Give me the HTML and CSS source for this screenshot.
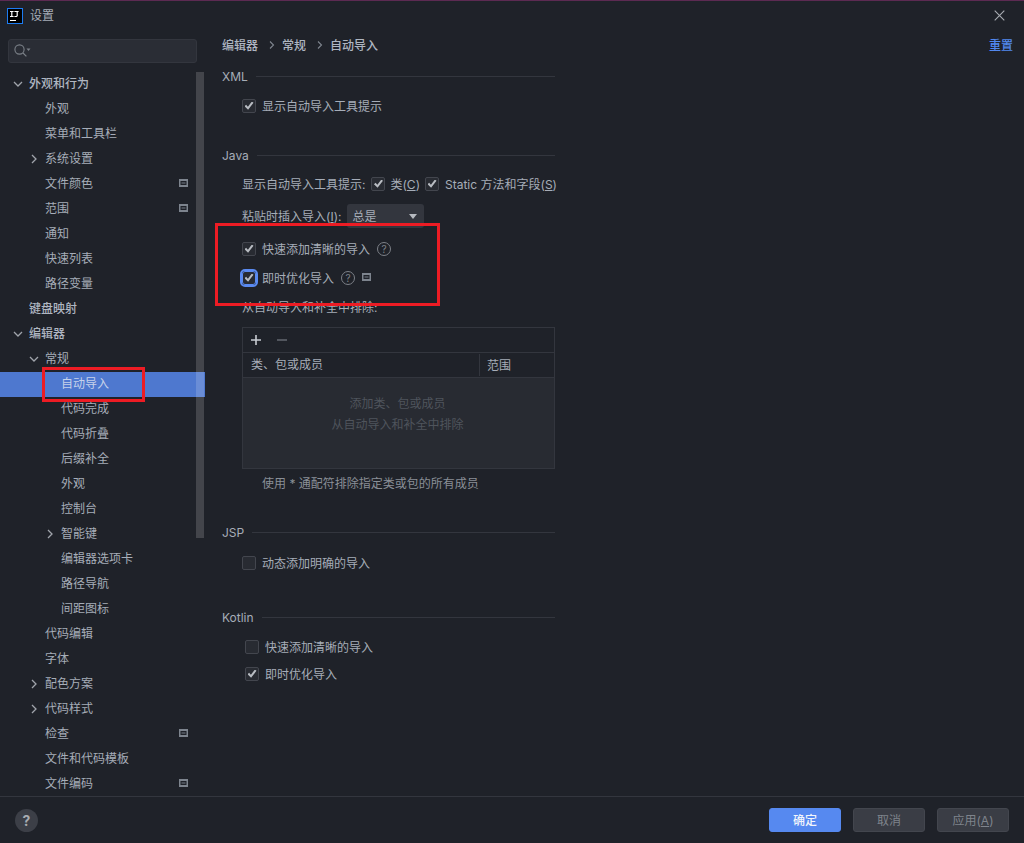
FILE: index.html
```html
<!DOCTYPE html>
<html lang="zh">
<head>
<meta charset="utf-8">
<title>设置</title>
<link rel="stylesheet" href="styles.css">
</head>
<body>
<div class="dialog">
  <header class="titlebar">
    <svg class="logo" width="16" height="16" viewBox="0 0 16 16"><rect x="0.5" y="0.5" width="15" height="15" fill="#000" stroke="#1d7cf2"/><rect x="3" y="12" width="6" height="1" fill="#fff"/><path d="M3 3h3.6v1H5.4v4h1.2v1H3V8h1.2V4H3z" fill="#fff"/><path d="M7.4 3h4.2v1h-.8v4l-1 1H7.4V8h1.8l.4-.4V4H7.4z" fill="#fff"/></svg>
    <span class="title">设置</span>
    <svg class="close" width="11" height="11" viewBox="0 0 11 11"><path d="M0.7 0.7l9.6 9.6M10.3 0.7L0.7 10.3" stroke="#a8acb2" stroke-width="1.1" fill="none"/></svg>
  </header>
  <div class="main">
    <aside class="sidebar">
      <div class="search">
        <svg width="18" height="14" viewBox="0 0 18 14"><circle cx="5.5" cy="5.5" r="4.6" fill="none" stroke="#7b8088" stroke-width="1.1"/><path d="M9 9l3.4 3.4" stroke="#7b8088" stroke-width="1.2"/><path d="M12.5 4.5h4l-2 2.5z" fill="#7b8088"/></svg>
      </div>
      <div class="tree-wrap">
        <nav class="tree">
          <div class="row l0 strong"><svg class="chev" width="10" height="10" viewBox="0 0 10 10"><path d="M1 3l4 4 4-4" fill="none" stroke="#a0a4ab" stroke-width="1.3"/></svg>外观和行为</div>
          <div class="row l1">外观</div>
          <div class="row l1">菜单和工具栏</div>
          <div class="row l1"><svg class="chev" width="10" height="10" viewBox="0 0 10 10"><path d="M3 1l4 4-4 4" fill="none" stroke="#a0a4ab" stroke-width="1.3"/></svg>系统设置</div>
          <div class="row l1">文件颜色<svg class="proj" width="9" height="8" viewBox="0 0 9 8"><rect width="9" height="8" fill="#7d848e"/><rect x="1.5" y="2" width="6" height="4" fill="#1f2229"/><rect x="2.5" y="3" width="4" height="2" fill="#4a4f58"/></svg></div>
          <div class="row l1">范围<svg class="proj" width="9" height="8" viewBox="0 0 9 8"><rect width="9" height="8" fill="#7d848e"/><rect x="1.5" y="2" width="6" height="4" fill="#1f2229"/><rect x="2.5" y="3" width="4" height="2" fill="#4a4f58"/></svg></div>
          <div class="row l1">通知</div>
          <div class="row l1">快速列表</div>
          <div class="row l1">路径变量</div>
          <div class="row l0 strong">键盘映射</div>
          <div class="row l0 strong"><svg class="chev" width="10" height="10" viewBox="0 0 10 10"><path d="M1 3l4 4 4-4" fill="none" stroke="#a0a4ab" stroke-width="1.3"/></svg>编辑器</div>
          <div class="row l1"><svg class="chev" width="10" height="10" viewBox="0 0 10 10"><path d="M1 3l4 4 4-4" fill="none" stroke="#a0a4ab" stroke-width="1.3"/></svg>常规</div>
          <div class="row l2 selected">自动导入<span class="mark mark-nav"></span></div>
          <div class="row l2">代码完成</div>
          <div class="row l2">代码折叠</div>
          <div class="row l2">后缀补全</div>
          <div class="row l2">外观</div>
          <div class="row l2">控制台</div>
          <div class="row l2"><svg class="chev" width="10" height="10" viewBox="0 0 10 10"><path d="M3 1l4 4-4 4" fill="none" stroke="#a0a4ab" stroke-width="1.3"/></svg>智能键</div>
          <div class="row l2">编辑器选项卡</div>
          <div class="row l2">路径导航</div>
          <div class="row l2">间距图标</div>
          <div class="row l1">代码编辑</div>
          <div class="row l1">字体</div>
          <div class="row l1"><svg class="chev" width="10" height="10" viewBox="0 0 10 10"><path d="M3 1l4 4-4 4" fill="none" stroke="#a0a4ab" stroke-width="1.3"/></svg>配色方案</div>
          <div class="row l1"><svg class="chev" width="10" height="10" viewBox="0 0 10 10"><path d="M3 1l4 4-4 4" fill="none" stroke="#a0a4ab" stroke-width="1.3"/></svg>代码样式</div>
          <div class="row l1">检查<svg class="proj" width="9" height="8" viewBox="0 0 9 8"><rect width="9" height="8" fill="#7d848e"/><rect x="1.5" y="2" width="6" height="4" fill="#1f2229"/><rect x="2.5" y="3" width="4" height="2" fill="#4a4f58"/></svg></div>
          <div class="row l1">文件和代码模板</div>
          <div class="row l1">文件编码<svg class="proj" width="9" height="8" viewBox="0 0 9 8"><rect width="9" height="8" fill="#7d848e"/><rect x="1.5" y="2" width="6" height="4" fill="#1f2229"/><rect x="2.5" y="3" width="4" height="2" fill="#4a4f58"/></svg></div>
        </nav>
        <div class="scrollbar"></div>
      </div>
    </aside>
    <main class="content">
      <div class="crumbs">
        <span>编辑器</span><svg class="sep" width="6" height="8" viewBox="0 0 6 8"><path d="M1 0.5L4.5 4 1 7.5" fill="none" stroke="#7f858e" stroke-width="1.1"/></svg><span>常规</span><svg class="sep" width="6" height="8" viewBox="0 0 6 8"><path d="M1 0.5L4.5 4 1 7.5" fill="none" stroke="#7f858e" stroke-width="1.1"/></svg><span>自动导入</span>
        <a class="reset">重置</a>
      </div>
      <div class="panel">
        <section class="sec sec-xml">
          <div class="sec-title"><span>XML</span></div>
          <label class="opt"><span class="cb on"></span>显示自动导入工具提示</label>
        </section>
        <section class="sec sec-java">
          <div class="sec-title"><span>Java</span></div>
          <div class="opt line1">显示自动导入工具提示:<span class="cb on gap-l"></span><span class="tx">类(<u>C</u>)</span><span class="cb on gap-m"></span><span class="tx">Static 方法和字段(<u>S</u>)</span></div>
          <div class="opt line2">粘贴时插入导入(<u>I</u>):<span class="select">总是<b class="caret"></b></span></div>
          <label class="opt line3"><span class="cb on"></span>快速添加清晰的导入<span class="help">?</span></label>
          <label class="opt line4"><span class="cb on focus"></span>即时优化导入<span class="help">?</span><svg class="inline-proj" width="9" height="8" viewBox="0 0 9 8"><rect width="9" height="8" fill="#7d848e"/><rect x="1.5" y="2" width="6" height="4" fill="#1f2229"/><rect x="2.5" y="3" width="4" height="2" fill="#4a4f58"/></svg></label>
          <div class="opt line5">从自动导入和补全中排除:</div>
          <div class="table">
            <div class="tools"><svg width="12" height="12" viewBox="0 0 12 12"><path d="M6 1v10M1 6h10" stroke="#c8ccd2" stroke-width="1.6"/></svg><svg width="12" height="12" viewBox="0 0 12 12"><path d="M1 6h10" stroke="#5f646c" stroke-width="1.6"/></svg></div>
            <div class="thead"><span class="c1">类、包或成员</span><span class="c2">范围</span></div>
            <div class="tbody"><p>添加类、包或成员</p><p>从自动导入和补全中排除</p></div>
          </div>
          <div class="note">使用 * 通配符排除指定类或包的所有成员</div>
        </section>
        <section class="sec sec-jsp">
          <div class="sec-title"><span>JSP</span></div>
          <label class="opt"><span class="cb"></span>动态添加明确的导入</label>
        </section>
        <section class="sec sec-kotlin">
          <div class="sec-title"><span>Kotlin</span></div>
          <label class="opt kt"><span class="cb"></span>快速添加清晰的导入</label>
          <label class="opt kt kt2"><span class="cb on"></span>即时优化导入</label>
        </section>
        <div class="mark mark-box"></div>
      </div>
    </main>
  </div>
  <footer class="footer">
    <span class="q">?</span>
    <div class="btns">
      <button class="btn primary">确定</button>
      <button class="btn">取消</button>
      <button class="btn">应用(<u>A</u>)</button>
    </div>
  </footer>
</div>
</body>
</html>
```
FILE: styles.css
```css
* { box-sizing: border-box; }
html, body { margin: 0; padding: 0; }
body {
  width: 1024px; height: 843px; overflow: hidden;
  background: #1f2229; color: #a6adb8;
  font: 12px/17px Inter, "Noto Sans CJK SC", sans-serif;
}
.dialog { display: flex; flex-direction: column; height: 843px; border-top: 1px solid #5c2a52; }
.titlebar { height: 29px; flex: none; display: flex; align-items: center; padding: 0 19px 0 7px; }
.logo { display: block; }
.title { margin-left: 7px; font-size: 12px; color: #a6adb8; }
.close { margin-left: auto; }
.main { flex: 1; display: flex; min-height: 0; }
.sidebar { width: 205px; flex: none; display: flex; flex-direction: column; }
.search {
  margin: 9px 8px 0 8px; height: 24px; background: #2a2d35; border: 1px solid #33363e; border-radius: 3px;
  display: flex; align-items: center; padding-left: 5px;
}
.tree-wrap { position: relative; margin-top: 9px; flex: 1; min-height: 0; overflow: hidden; }
.row { height: 25px; line-height: 24px; position: relative; white-space: nowrap; color: #a6adb8; }
.l0 { padding-left: 29px; }
.l1 { padding-left: 45px; }
.l2 { padding-left: 61px; }
.strong { font-weight: 500; color: #afb6c1; }
.chev { position: absolute; top: 7px; margin-left: -16px; }
.proj { position: absolute; right: 17px; top: 7px; }
.selected { background: #4e78cf; color: #c6d2ea; }
.scrollbar { position: absolute; right: 1px; top: 0; width: 8px; height: 466px; background: rgba(255,255,255,.16); }
.mark { position: absolute; border: 3px solid #ed1c24; }
.mark-nav { left: 42px; top: -5px; width: 103px; height: 35px; }
.content { flex: 1; min-width: 0; padding-left: 17px; display: flex; flex-direction: column; }
.crumbs { height: 30px; margin-bottom: 2px; padding-right: 11px; display: flex; align-items: center; font-weight: 500; color: #afb6c1; }
.sep { margin: 0 7px 0 11px; }
.reset { margin-left: auto; color: #5288ee; font-weight: 500; }
.panel { position: relative; width: 333px; }
.sec-title { display: flex; align-items: center; gap: 8px; height: 17px; }
.sec-title::after { content: ""; flex: 1; height: 1px; background: #33363e; }
.sec-title span { color: #a6adb8; }
.sec-xml { padding-top: 6px; }
.sec-java { margin-top: 31px; }
.sec-jsp { margin-top: 32px; }
.sec-kotlin { margin-top: 36px; }
.opt { display: flex; align-items: center; height: 20px; margin-left: 20px; white-space: nowrap; }
.sec-xml .opt { margin-top: 11px; }
.sec-jsp .opt { margin-top: 12px; }
.cb { width: 14px; height: 14px; flex: none; border: 1px solid #43464e; background: #282b32; border-radius: 2px; margin-right: 6px; position: relative; }
.cb.on::after {
  content: ""; position: absolute; left: 1.5px; top: 1.5px; width: 9px; height: 9px;
  background: #b8bcc2;
  clip-path: polygon(0 52%, 18% 36%, 38% 58%, 82% 0, 100% 14%, 40% 92%);
}
.cb.focus { outline: 2px solid #5a8af0; border-color: #5a8af0; border-radius: 3px; }
.gap-l { margin-left: 6px; margin-right: 5px; }
.gap-m { margin-left: 5px; margin-right: 6px; }
.line1 { margin-top: 10px; }
.line2 { margin-top: 12px; }
.select { display: flex; align-items: center; width: 77px; height: 24px; margin-left: 6px; padding-left: 5px; background: #33363e; border-radius: 3px; position: relative; color: #a6adb8; }
.caret { position: absolute; right: 7px; top: 10px; border: 4.5px solid transparent; border-top: 5px solid #b6bac0; border-bottom: 0; }
.line3 { margin-top: 13px; }
.line4 { margin-top: 9px; }
.line5 { margin-top: 9px; }
.help { width: 14px; height: 14px; flex: none; margin-left: 7px; border: 1px solid #7c8087; border-radius: 50%; font-size: 10px; line-height: 12px; text-align: center; color: #7c8087; }
.inline-proj { margin-left: 7px; margin-top: -3px; }
.table { margin: 10px 0 0 20px; width: 313px; height: 142px; border: 1px solid #33363e; display: flex; flex-direction: column; }
.tools { height: 25px; flex: none; display: flex; align-items: center; gap: 14px; padding-left: 7px; border-bottom: 1px solid #33363e; }
.thead { height: 25px; flex: none; display: flex; align-items: center; border-bottom: 1px solid #33363e; }
.c1 { width: 237px; padding-left: 8px; border-right: 1px solid #33363e; height: 22px; line-height: 22px; }
.c2 { padding-left: 7px; }
.tbody { flex: 1; background: #282b32; padding: 15px 2px 0 0; text-align: center; color: #4f545c; line-height: 21px; }
.tbody p { margin: 0; }
.note { margin: 6px 0 0 40px; height: 17px; color: #8a8f97; }
.kt { margin-left: 23px; margin-top: 11px; }
.kt2 { margin-top: 7px; }
.mark-box { left: -7px; top: 161px; width: 225px; height: 83px; }
.footer { height: 47px; flex: none; border-top: 1px solid #33363e; display: flex; align-items: center; padding: 0 15px; }
.q { width: 23px; height: 23px; border-radius: 50%; background: #3c3f47; color: #a8acb2; font-size: 14px; font-weight: 700; line-height: 23px; text-align: center; }
.btns { margin-left: auto; display: flex; gap: 12px; }
.btn { width: 72px; height: 24px; padding: 0; border: 1px solid #43464e; background: #3a3d45; color: #7f848c; border-radius: 3px; font: inherit; }
.btn.primary { background: #5689f0; border-color: #5689f0; color: #f2f5fb; font-weight: 500; }
```
